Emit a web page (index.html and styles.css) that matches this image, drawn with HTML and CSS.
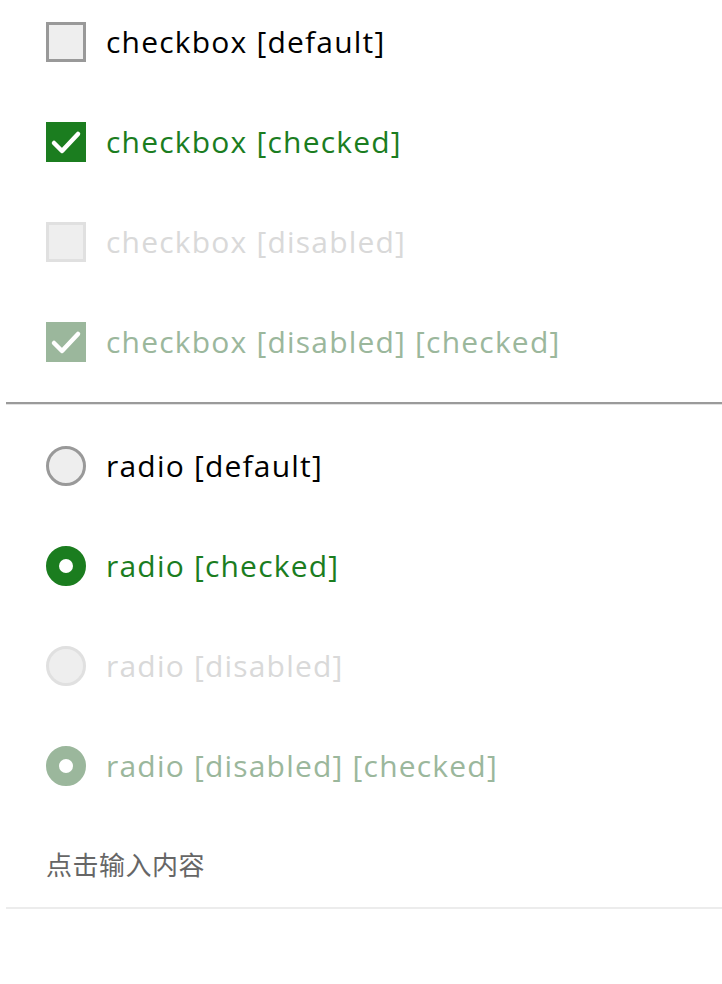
FILE: index.html
```html
<!DOCTYPE html>
<html lang="zh">
<head>
<meta charset="utf-8">
<link rel="stylesheet" href="styles.css">
</head>
<body>
<div class="page">
  <div class="group group-check">
    <label class="row">
      <span class="box"></span>
      <span class="label">checkbox [default]</span>
    </label>
    <label class="row is-checked">
      <span class="box">
        <svg viewBox="0 0 40 40" class="tick"><path d="M8 21 L16 29 L32 12"/></svg>
      </span>
      <span class="label">checkbox [checked]</span>
    </label>
    <label class="row is-disabled">
      <span class="box"></span>
      <span class="label">checkbox [disabled]</span>
    </label>
    <label class="row is-disabled-checked">
      <span class="box">
        <svg viewBox="0 0 40 40" class="tick"><path d="M8 21 L16 29 L32 12"/></svg>
      </span>
      <span class="label">checkbox [disabled] [checked]</span>
    </label>
  </div>
  <div class="divider"></div>
  <div class="group group-radio">
    <label class="row">
      <span class="box round"></span>
      <span class="label">radio [default]</span>
    </label>
    <label class="row is-checked">
      <span class="box round"><span class="dot"></span></span>
      <span class="label">radio [checked]</span>
    </label>
    <label class="row is-disabled">
      <span class="box round"></span>
      <span class="label">radio [disabled]</span>
    </label>
    <label class="row is-disabled-checked">
      <span class="box round"><span class="dot"></span></span>
      <span class="label">radio [disabled] [checked]</span>
    </label>
  </div>
  <div class="input">点击输入内容</div>
</div>
</body>
</html>
```

FILE: styles.css
```css
html, body {
  margin: 0;
  padding: 0;
  background: #fff;
}
body {
  font-family: "Open Sans", "Noto Sans", "Noto Sans CJK SC", sans-serif;
}
.page {
  margin-left: 6px;
}
.group {
  display: flex;
  flex-direction: column;
  gap: 60px;
  padding-left: 40px;
}
.group-check {
  padding-top: 22px;
}
.group-radio {
  padding-top: 41px;
}
.row {
  display: flex;
  align-items: center;
  height: 40px;
  gap: 20px;
}
.box {
  box-sizing: border-box;
  width: 40px;
  height: 40px;
  flex: none;
  border: 3px solid #999;
  background: #eee;
  display: flex;
  align-items: center;
  justify-content: center;
}
.box.round {
  border-radius: 50%;
}
.label {
  font-size: 30px;
  letter-spacing: 1.2px;
  color: #000;
  line-height: 40px;
}
.tick {
  width: 40px;
  height: 40px;
  flex: none;
}
.tick path {
  fill: none;
  stroke: #fff;
  stroke-width: 4.5;
  stroke-linecap: round;
  stroke-linejoin: round;
}
.dot {
  width: 14px;
  height: 14px;
  border-radius: 50%;
  background: #fff;
}
.is-checked .box {
  background: #1b7d1f;
  border-color: #1b7d1f;
}
.is-checked .label {
  color: #1b7d1f;
}
.is-disabled .box {
  background: #eee;
  border-color: #e0e0e0;
}
.is-disabled .label {
  color: #d9d9d9;
}
.is-disabled-checked .box {
  background: #9bb79c;
  border-color: #9bb79c;
}
.is-disabled-checked .label {
  color: #9bb79c;
}
.divider {
  margin-top: 40px;
  height: 0;
  border-top: 2px solid #9a9a9a;
  border-bottom: 1px solid #e2e2e2;
}
.input {
  margin-top: 60px;
  padding-left: 40px;
  font-family: "Noto Sans CJK SC", sans-serif;
  font-size: 26px;
  letter-spacing: 0.5px;
  color: #666;
  line-height: 36px;
  padding-bottom: 25px;
  border-bottom: 2px solid #ececec;
}
```
